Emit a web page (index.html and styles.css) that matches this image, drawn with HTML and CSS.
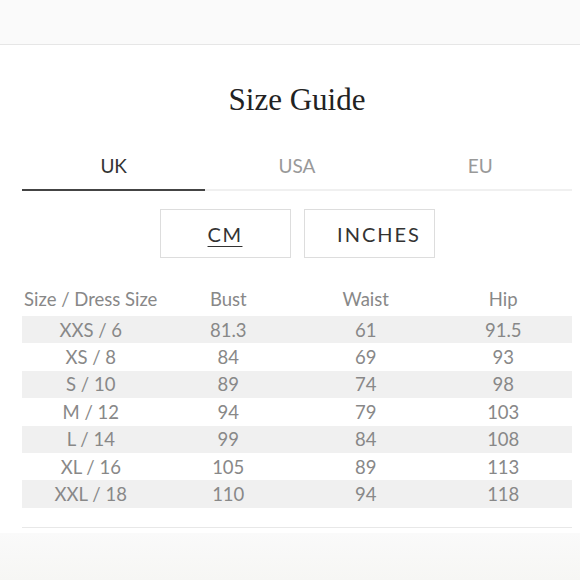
FILE: index.html
```html
<!DOCTYPE html>
<html>
<head>
<meta charset="utf-8">
<link rel="stylesheet" href="styles.css">
</head>
<body>
<div class="topbar"></div>
<main class="panel">
  <h1 class="title">Size Guide</h1>
  <nav class="tabs">
    <div class="tab active">UK</div>
    <div class="tab">USA</div>
    <div class="tab">EU</div>
  </nav>
  <div class="units">
    <div class="unit"><span class="ul">CM</span></div>
    <div class="unit inches">INCHES</div>
  </div>
  <div class="table">
    <div class="row head"><span>Size / Dress Size</span><span>Bust</span><span>Waist</span><span>Hip</span></div>
    <div class="row alt"><span>XXS / 6</span><span>81.3</span><span>61</span><span>91.5</span></div>
    <div class="row"><span>XS / 8</span><span>84</span><span>69</span><span>93</span></div>
    <div class="row alt"><span>S / 10</span><span>89</span><span>74</span><span>98</span></div>
    <div class="row"><span>M / 12</span><span>94</span><span>79</span><span>103</span></div>
    <div class="row alt"><span>L / 14</span><span>99</span><span>84</span><span>108</span></div>
    <div class="row"><span>XL / 16</span><span>105</span><span>89</span><span>113</span></div>
    <div class="row alt"><span>XXL / 18</span><span>110</span><span>94</span><span>118</span></div>
  </div>
  <div class="endline"></div>
</main>
<div class="footer"></div>
</body>
</html>
```

FILE: styles.css
```css
* { box-sizing: border-box; margin: 0; padding: 0; }
html, body { width: 580px; height: 580px; overflow: hidden; background: #fff; }
body { font-family: Lato, "Open Sans", sans-serif; }
.topbar { height: 45px; background: #fafafa; border-bottom: 1px solid #e6e6e6; }
.panel { padding: 0 8px 0 22px; }
.title {
  font-family: "Liberation Serif", serif;
  font-weight: normal;
  font-size: 31px;
  color: #222;
  text-align: center;
  margin-top: 35px;
  height: 64px;
  line-height: 40px;
}
.tabs { display: flex; border-bottom: 2px solid #f0f0f0; height: 47px; }
.tab { flex: 1; text-align: center; font-size: 19px; color: #999; line-height: 43px; }
.tab.active { color: #333; border-bottom: 2px solid #444; margin-bottom: -2px; }
.units { display: flex; justify-content: center; gap: 13px; margin-top: 18px; }
.unit {
  width: 131px; height: 49px; border: 1px solid #ddd;
  display: flex; align-items: center; justify-content: center;
  font-size: 20px; letter-spacing: 1.5px; color: #333;
}
.unit.inches { padding-left: 20px; letter-spacing: 2px; }
.ul { text-decoration: underline; text-underline-offset: 4px; text-decoration-thickness: 1px; }
.table { margin-top: 30px; }
.row { display: grid; grid-template-columns: repeat(4, 1fr); height: 27.4px; align-items: center; font-size: 18.5px; color: #888; }
.row span { text-align: center; }
.row.head { height: 28px; align-items: start; }
.row.alt { background: #f0f0f0; }
.endline { margin-top: 19px; border-top: 1px solid #e8e8e8; }
.footer { position: absolute; left: 0; top: 533px; width: 580px; height: 47px; background: linear-gradient(#fafafa, #f6f6f4); }
```
